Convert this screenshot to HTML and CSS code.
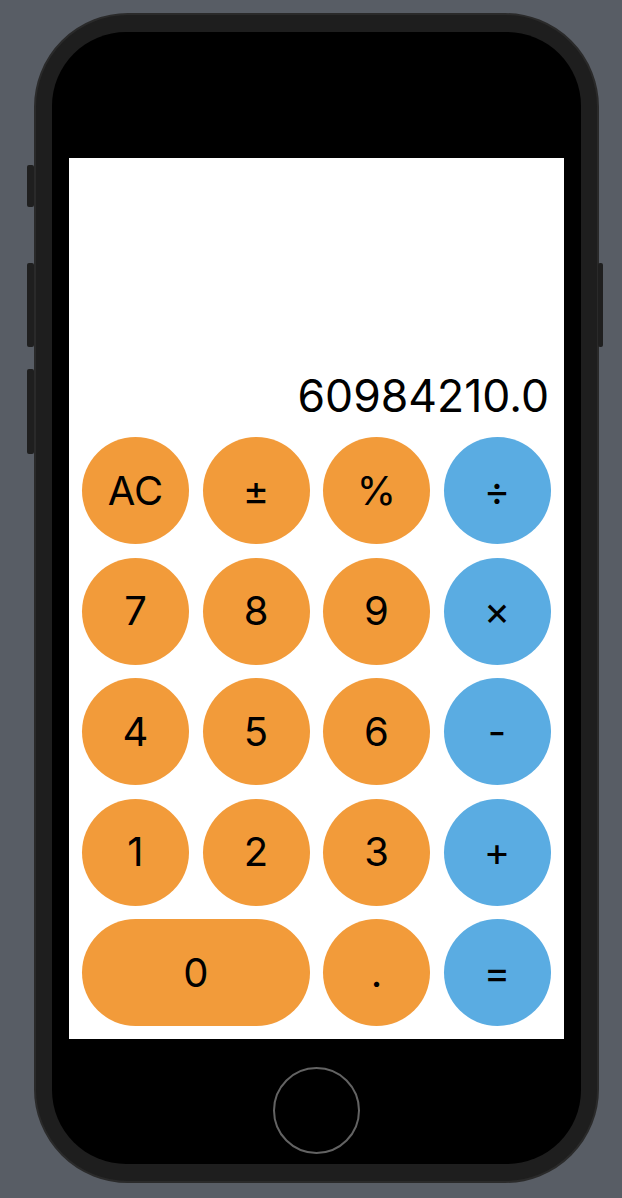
FILE: index.html
```html
<!DOCTYPE html>
<html lang="en">
<head>
<meta charset="utf-8">
<title>Calculator</title>
<link rel="stylesheet" href="styles.css">
</head>
<body>
<div class="stage">
  <div class="phone">
    <span class="side side-l1"></span>
    <span class="side side-l2"></span>
    <span class="side side-l3"></span>
    <span class="side side-r1"></span>
    <div class="bezel">
      <div class="screen">
        <div class="display">60984210.0</div>
        <div class="keys">
          <button class="key orange">AC</button>
          <button class="key orange">±</button>
          <button class="key orange">%</button>
          <button class="key blue">÷</button>
          <button class="key orange">7</button>
          <button class="key orange">8</button>
          <button class="key orange">9</button>
          <button class="key blue">×</button>
          <button class="key orange">4</button>
          <button class="key orange">5</button>
          <button class="key orange">6</button>
          <button class="key blue">-</button>
          <button class="key orange">1</button>
          <button class="key orange">2</button>
          <button class="key orange">3</button>
          <button class="key blue">+</button>
          <button class="key orange wide">0</button>
          <button class="key orange">.</button>
          <button class="key blue">=</button>
        </div>
      </div>
      <div class="home"></div>
    </div>
  </div>
</div>
</body>
</html>
```

FILE: styles.css
```css
html, body {
  margin: 0;
  padding: 0;
}
body {
  background: #585d65;
  width: 622px;
  height: 1198px;
  overflow: hidden;
  font-family: Inter, "Liberation Sans", sans-serif;
}
.stage {
  padding: 13px 0 0 34px;
}
.phone {
  position: relative;
  box-sizing: border-box;
  width: 565px;
  height: 1170px;
  border-radius: 94px;
  background: #1e1e1e;
  border: 2px solid #2a2a2a;
  padding: 17px 16px;
}
.side {
  position: absolute;
  width: 7px;
  background: #1f1f1f;
  border-radius: 2px;
}
.side-l1 { left: -9px; top: 150px; height: 42px; }
.side-l2 { left: -9px; top: 248px; height: 84px; }
.side-l3 { left: -9px; top: 354px; height: 85px; }
.side-r1 { right: -6px; top: 248px; height: 84px; width: 5px; }
.bezel {
  height: 100%;
  background: #000;
  border-radius: 74px;
  padding: 126px 17px 0 17px;
  box-sizing: border-box;
  display: flex;
  flex-direction: column;
  align-items: center;
}
.screen {
  width: 495px;
  height: 881px;
  background: #fff;
  display: flex;
  flex-direction: column;
  justify-content: flex-end;
  padding: 0 13px 13px 13px;
  box-sizing: border-box;
}
.display {
  font-size: 44.5px;
  line-height: 44px;
  text-align: right;
  color: #000;
  padding-right: 2px;
  margin-bottom: 19px;
}
.keys {
  display: grid;
  grid-template-columns: repeat(4, 107px);
  grid-auto-rows: 107px;
  column-gap: 13.5px;
  row-gap: 13.5px;
}
.key {
  border: none;
  margin: 0;
  padding: 0;
  border-radius: 54px;
  font-family: Inter, "Liberation Sans", sans-serif;
  font-size: 40px;
  line-height: 1;
  color: #000;
  display: flex;
  align-items: center;
  justify-content: center;
}
.orange { background: #f29b3a; }
.blue { background: #5aace2; }
.wide { grid-column: span 2; }
.home {
  margin-top: 28px;
  width: 87px;
  height: 87px;
  box-sizing: border-box;
  border-radius: 50%;
  border: 2px solid #636363;
}
```
